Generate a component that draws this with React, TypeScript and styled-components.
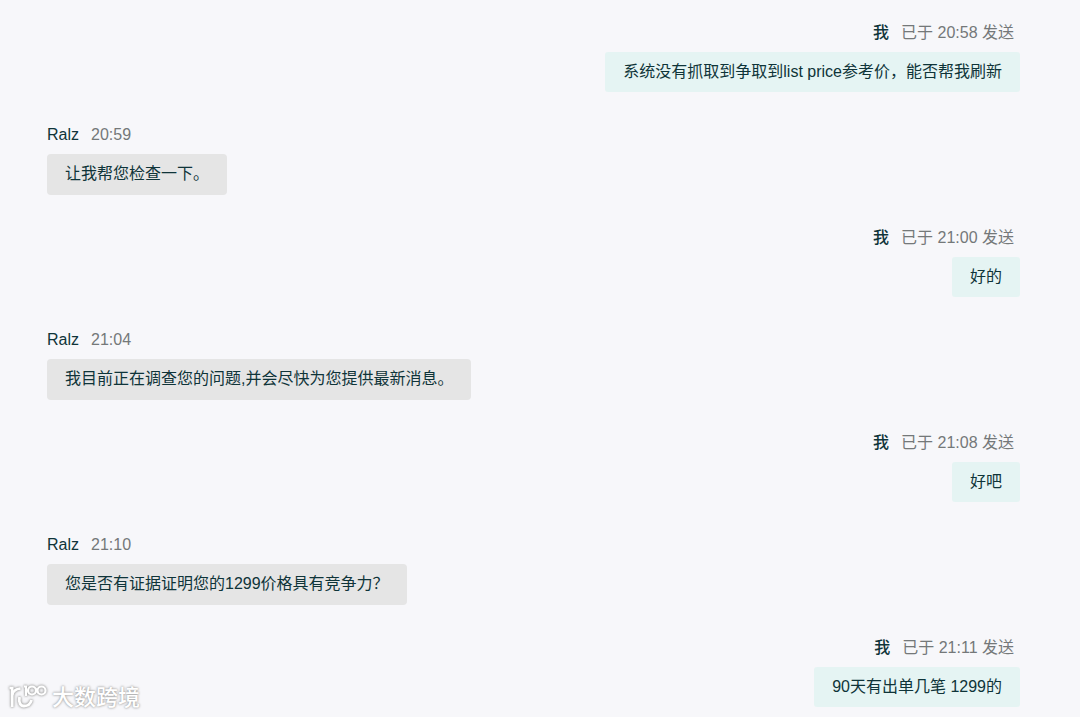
import React from "react";
import styled, { createGlobalStyle } from "styled-components";

const GlobalStyle = createGlobalStyle`
  *, *::before, *::after { box-sizing: border-box; }
  body {
    margin: 0;
    background: #f7f7fa;
    color: #0f3439;
    font-family: "Liberation Sans", "Noto Sans CJK SC", sans-serif;
    font-size: 16px;
    line-height: 24px;
  }
`;

const Page = styled.main`
  position: relative;
  min-height: 100vh;
  padding: 21px 60px 10px 47px;
`;

const Thread = styled.ol`
  display: flex;
  flex-direction: column;
  gap: 31px;
  margin: 0;
  padding: 0;
  list-style: none;
`;

const Message = styled.li<{ $own: boolean }>`
  display: flex;
  flex-direction: column;
  align-items: ${(p) => (p.$own ? "flex-end" : "flex-start")};
  gap: 7px;
`;

const Meta = styled.header<{ $own: boolean }>`
  display: flex;
  gap: 12px;
  padding-right: ${(p) => (p.$own ? "6px" : "0")};
`;

const Author = styled.span<{ $own: boolean }>`
  font-weight: ${(p) => (p.$own ? 500 : 400)};
`;

const Time = styled.time`
  color: #747879;
`;

const Bubble = styled.p<{ $own: boolean }>`
  margin: 0;
  padding: ${(p) => (p.$own ? "8px 18px" : "8px 18px 9px")};
  border-radius: ${(p) => (p.$own ? "3px" : "4px")};
  background: ${(p) => (p.$own ? "#e5f4f3" : "#e5e5e5")};
`;

const Watermark = styled.div`
  position: absolute;
  left: 8px;
  bottom: 4px;
  display: flex;
  align-items: center;
  gap: 4px;
  color: #ffffff;
  font-size: 22px;
  line-height: 30px;
  font-weight: 500;
  text-shadow: 0 0 2px #a0a0a0, 0 0 3px #b0b0b0;
`;

const Logo = styled.svg`
  width: 40px;
  height: 30px;
  overflow: visible;
  filter: drop-shadow(0 0 1px #a0a0a0) drop-shadow(0 0 1px #c0c0c0);
`;

interface Entry {
  author: string;
  time: string;
  text: string;
  own: boolean;
}

const entries: Entry[] = [
  { author: "我", time: "20:58", text: "系统没有抓取到争取到list price参考价，能否帮我刷新", own: true },
  { author: "Ralz", time: "20:59", text: "让我帮您检查一下。", own: false },
  { author: "我", time: "21:00", text: "好的", own: true },
  { author: "Ralz", time: "21:04", text: "我目前正在调查您的问题,并会尽快为您提供最新消息。", own: false },
  { author: "我", time: "21:08", text: "好吧", own: true },
  { author: "Ralz", time: "21:10", text: "您是否有证据证明您的1299价格具有竞争力？", own: false },
  { author: "我", time: "21:11", text: "90天有出单几笔 1299的", own: true },
];

export default function App() {
  return (
    <>
      <GlobalStyle />
      <Page lang="zh-CN">
        <Thread>
          {entries.map(({ author, time, text, own }) => (
            <Message key={time} $own={own}>
              <Meta $own={own}>
                <Author $own={own}>{author}</Author>
                <Time dateTime={time}>{own ? `已于 ${time} 发送` : time}</Time>
              </Meta>
              <Bubble $own={own}>{text}</Bubble>
            </Message>
          ))}
        </Thread>
        <Watermark>
          <Logo viewBox="0 0 40 30" fill="none" stroke="#ffffff" aria-hidden="true">
            <path d="M1.5 5 H4.2 V24" strokeWidth="2.6" />
            <path d="M4.2 12 C5 8 8 6 12.5 5.5" strokeWidth="2.6" />
            <path d="M11.5 14 C10.5 20 12.5 23 16 23 C19.5 23 22.5 21 23.5 17" strokeWidth="2.8" />
            <path d="M16 3.5 H18 V13" strokeWidth="2" />
            <circle cx="24" cy="7.5" r="4" strokeWidth="2.2" />
            <circle cx="33.5" cy="7.5" r="4" strokeWidth="2.2" />
            <path d="M27.5 5 L30 10" strokeWidth="1.8" />
          </Logo>
          <span>大数跨境</span>
        </Watermark>
      </Page>
    </>
  );
}
